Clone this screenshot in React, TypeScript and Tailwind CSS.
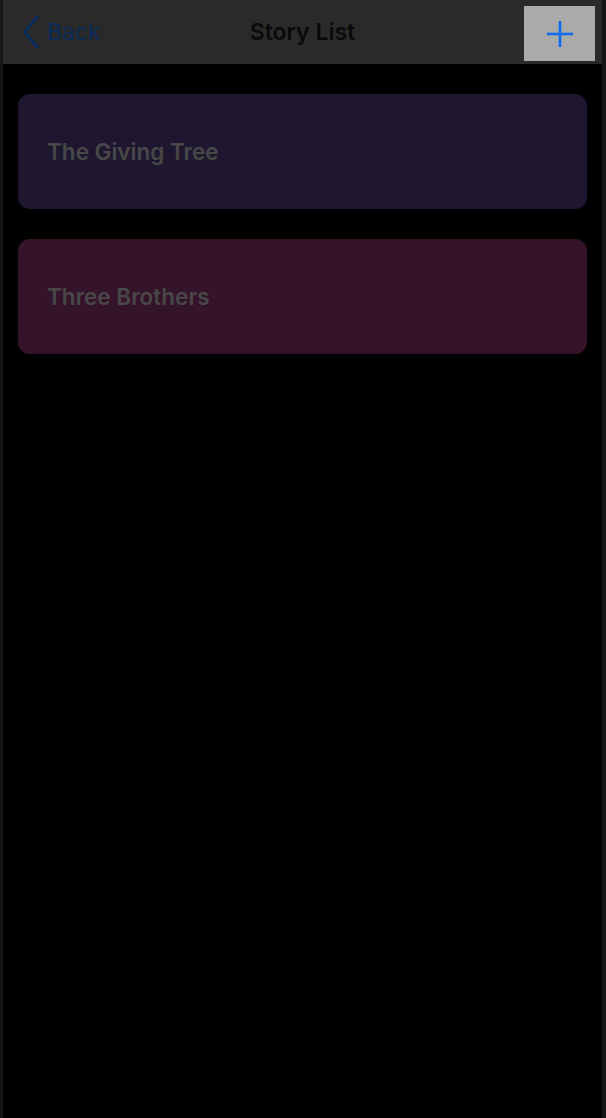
import React from 'react';

const stories = [
  { title: 'The Giving Tree', color: 'bg-[#1f1730]' },
  { title: 'Three Brothers', color: 'bg-[#35142b]' },
];

export default function App() {
  return (
    <div
      className="flex h-[1118px] w-full bg-black"
      style={{ fontFamily: 'Inter, "Noto Sans", sans-serif' }}
    >
      <div className="w-[3px] bg-[#161616]" />
      <div className="flex flex-1 flex-col">
        <header className="relative flex h-[64px] items-center bg-[#2a2a2a]">
          <div className="flex items-center pl-[18px] text-[#0b2a5c]">
            <svg width="20" height="34" viewBox="0 0 20 34" fill="none">
              <path
                d="M16.5 2 L3.5 17 L16.5 32"
                stroke="currentColor"
                strokeWidth="3.2"
                strokeLinecap="round"
                strokeLinejoin="round"
              />
            </svg>
            <span className="ml-[6px] text-[23px] leading-none">Back</span>
          </div>
          <h1 className="absolute left-1/2 -translate-x-1/2 text-[23px] font-semibold text-[#0a0a0a]">
            Story List
          </h1>
          <button className="ml-auto mr-[7px] mt-[3px] flex h-[55px] w-[71px] items-center justify-center bg-[#aaaaaa]">
            <svg width="28" height="28" viewBox="0 0 28 28">
              <path
                d="M14 1 V27 M1 14 H27"
                stroke="#0a6cf0"
                strokeWidth="2.6"
              />
            </svg>
          </button>
        </header>
        <main className="flex flex-col gap-[30px] px-[15px] pt-[30px]">
          {stories.map((s) => (
            <div
              key={s.title}
              className={`flex h-[115px] items-center rounded-[12px] px-[29px] ${s.color}`}
            >
              <span className="text-[22.5px] font-semibold text-[#474747]">{s.title}</span>
            </div>
          ))}
        </main>
      </div>
      <div className="w-[4px] bg-[#161616]" />
    </div>
  );
}
